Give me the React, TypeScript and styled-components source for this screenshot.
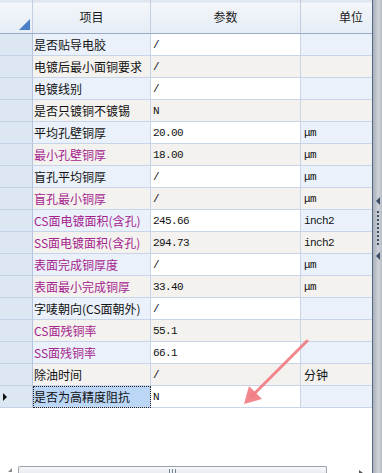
import React from 'react'
import styled, { createGlobalStyle } from 'styled-components'

type Row = { name: string; value: string; unit: string; pink?: boolean }

const rows: Row[] = [
  { name: '是否贴导电胶', value: '/', unit: '' },
  { name: '电镀后最小面铜要求', value: '/', unit: '' },
  { name: '电镀线别', value: '/', unit: '' },
  { name: '是否只镀铜不镀锡', value: 'N', unit: '' },
  { name: '平均孔壁铜厚', value: '20.00', unit: 'μm' },
  { name: '最小孔壁铜厚', value: '18.00', unit: 'μm', pink: true },
  { name: '盲孔平均铜厚', value: '/', unit: 'μm' },
  { name: '盲孔最小铜厚', value: '/', unit: 'μm', pink: true },
  { name: 'CS面电镀面积(含孔)', value: '245.66', unit: 'inch2', pink: true },
  { name: 'SS面电镀面积(含孔)', value: '294.73', unit: 'inch2', pink: true },
  { name: '表面完成铜厚度', value: '/', unit: 'μm', pink: true },
  { name: '表面最小完成铜厚', value: '33.40', unit: 'μm', pink: true },
  { name: '字唛朝向(CS面朝外)', value: '/', unit: '' },
  { name: 'CS面残铜率', value: '55.1', unit: '', pink: true },
  { name: 'SS面残铜率', value: '66.1', unit: '', pink: true },
  { name: '除油时间', value: '/', unit: '分钟' },
  { name: '是否为高精度阻抗', value: 'N', unit: '' },
]

const GlobalStyle = createGlobalStyle`
  html, body { margin: 0; padding: 0; background: #fff; }
  body { font-family: "Noto Sans CJK SC", "Noto Sans", sans-serif; }
`

export default function App() {
  const current = rows.length - 1
  return (
    <Page>
      <GlobalStyle />
      <GridPanel>
        <HeaderRow>
          <CornerCell>
            <CornerMark />
          </CornerCell>
          <HeadCell>项目</HeadCell>
          <HeadCell>参数</HeadCell>
          <HeadCell $align="right">单位</HeadCell>
        </HeaderRow>
        {rows.map((r, i) => (
          <DataRow key={r.name} $even={i % 2 === 1}>
            <RowHead>{i === current && <RowPointer />}</RowHead>
            <NameCell $pink={r.pink} $selected={i === current}>{r.name}</NameCell>
            <ValueCell>{r.value}</ValueCell>
            <UnitCell $cjk={r.unit === '分钟'}>{r.unit}</UnitCell>
          </DataRow>
        ))}
        <Filler />
        <HScroll>
          <Grip />
          <Thumb>
            <ThumbLines />
          </Thumb>
          <ArrowRight />
        </HScroll>
        <Pointer viewBox="0 0 382 473" width="382" height="473">
          <line x1="307" y1="341" x2="252" y2="396" stroke="#f07a80" strokeWidth="3" strokeLinecap="round" opacity="0.9" />
          <polygon points="244,404 249,386 262,399" fill="#f07a80" opacity="0.9" />
        </Pointer>
      </GridPanel>
      <Splitter>
        <SplitTri />
        <SplitDots />
        <SplitTri />
      </Splitter>
    </Page>
  )
}

const Page = styled.div`
  display: flex;
  width: 382px;
  height: 473px;
  overflow: hidden;
`

const GridPanel = styled.div`
  position: relative;
  width: 373px;
  display: flex;
  flex-direction: column;
  border-right: 1px solid #56698c;
  box-sizing: border-box;
`

const HeaderRow = styled.div`
  display: grid;
  grid-template-columns: 33px 118px 150px 71px;
  height: 34px;
  background: linear-gradient(#dfe6ef 0px, #dfe6ef 2px, #f3f6fa 3px, #e6edf6 100%);
  border-bottom: 1px solid #9aabc6;
  box-sizing: border-box;
`

const CornerCell = styled.div`
  position: relative;
  border-right: 1px solid #c3cfe0;
`

const CornerMark = styled.div`
  position: absolute;
  right: 2px;
  bottom: 3px;
  width: 0;
  height: 0;
  border-left: 11px solid transparent;
  border-bottom: 11px solid #4b7ec6;
`

const HeadCell = styled.div<{ $align?: string }>`
  display: flex;
  align-items: center;
  justify-content: ${p => (p.$align === 'right' ? 'flex-end' : 'center')};
  padding-right: ${p => (p.$align === 'right' ? '9px' : '0')};
  border-right: ${p => (p.$align === 'right' ? 'none' : '1px solid #c3cfe0')};
  font-size: 12px;
  color: #1a1a1a;
`

const DataRow = styled.div<{ $even: boolean }>`
  display: grid;
  grid-template-columns: 33px 118px 150px 71px;
  height: 22px;
  --cell-bg: ${p => (p.$even ? '#f3f2ef' : '#ffffff')};
  --ro-bg: ${p => (p.$even ? '#f3f2ef' : '#eaf1fb')};
`

const Cell = styled.div`
  display: flex;
  align-items: center;
  border-right: 1px solid #c8d5e8;
  border-bottom: 1px solid #c8d5e8;
  box-sizing: border-box;
  overflow: hidden;
  white-space: nowrap;
`

const RowHead = styled(Cell)`
  background: #dde6f3;
  border-right: 1px solid #b5c4dc;
  border-bottom: 1px solid #c4d1e4;
  padding-left: 3px;
`

const RowPointer = styled.div`
  width: 0;
  height: 0;
  border-top: 4px solid transparent;
  border-bottom: 4px solid transparent;
  border-left: 4px solid #111;
`

const NameCell = styled(Cell)<{ $pink?: boolean; $selected?: boolean }>`
  background: ${p => (p.$selected ? '#bcd7f6' : 'var(--ro-bg)')};
  color: ${p => (p.$pink ? '#a5238d' : '#111')};
  font-size: 12px;
  padding-left: 1px;
  outline: ${p => (p.$selected ? '1px dotted #222' : 'none')};
  outline-offset: -1px;
`

const ValueCell = styled(Cell)`
  background: var(--cell-bg);
  font-family: "Liberation Mono", "DejaVu Sans Mono", monospace;
  font-size: 11px;
  letter-spacing: -0.6px;
  color: #111;
  padding-left: 2px;
`

const UnitCell = styled(Cell)<{ $cjk?: boolean }>`
  background: var(--ro-bg);
  border-right: none;
  font-family: ${p => (p.$cjk ? '"Noto Sans CJK SC", sans-serif' : '"Liberation Mono", "DejaVu Sans Mono", monospace')};
  font-size: ${p => (p.$cjk ? '12px' : '11px')};
  letter-spacing: ${p => (p.$cjk ? '0' : '-0.6px')};
  color: #111;
  padding-left: 3px;
`

const Filler = styled.div`
  flex: 1;
  background: #fff;
`

const HScroll = styled.div`
  display: flex;
  align-items: flex-end;
  height: 8px;
  background: #fff;
`

const Grip = styled.div`
  width: 0;
  height: 0;
  margin: 0 6px 1px 8px;
  border-left: 4px solid transparent;
  border-bottom: 4px solid #8a8a8a;
`

const Thumb = styled.div`
  width: 309px;
  height: 7px;
  box-sizing: border-box;
  border: 1px solid #9aa3ae;
  border-bottom: none;
  border-radius: 2px 2px 0 0;
  background: linear-gradient(#f6f7f9, #e9ecf1);
  display: flex;
  justify-content: center;
  align-items: flex-end;
  overflow: hidden;
`

const ThumbLines = styled.div`
  width: 7px;
  height: 4px;
  background: repeating-linear-gradient(90deg, #7a8592 0px, #7a8592 1px, transparent 1px, transparent 3px);
`

const ArrowRight = styled.div`
  width: 0;
  height: 0;
  margin: 0 0 0 32px;
  border-top: 3px solid transparent;
  border-left: 4px solid #555;
`

const Pointer = styled.svg`
  position: absolute;
  left: 0;
  top: 0;
  pointer-events: none;
`

const Splitter = styled.div`
  width: 9px;
  display: flex;
  flex-direction: column;
  align-items: center;
  justify-content: center;
  gap: 6px;
  padding-bottom: 16px;
  box-sizing: border-box;
  background: linear-gradient(90deg, #a9afb8, #cfd3d9 60%, #b8bdc5);
`

const SplitTri = styled.div`
  width: 0;
  height: 0;
  border-top: 4px solid transparent;
  border-bottom: 4px solid transparent;
  border-right: 4px solid #3c4d6c;
`

const SplitDots = styled.div`
  width: 2px;
  height: 35px;
  background: repeating-linear-gradient(#3c4d6c 0px, #3c4d6c 2px, transparent 2px, transparent 4px);
`
